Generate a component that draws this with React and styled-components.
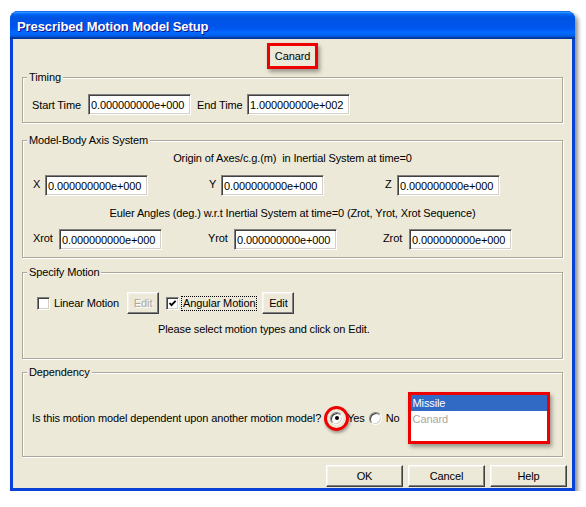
import React from "react";
import styled, { createGlobalStyle } from "styled-components";

const GlobalStyle = createGlobalStyle`
  html, body { margin: 0; background: #fff; }
  body {
    font-family: "Liberation Sans", Arial, sans-serif;
    font-size: 11px;
    letter-spacing: -0.12px;
    color: #000;
  }
`;

const Page = styled.div`
  padding: 11px 0 0 10px;
`;

const Window = styled.div`
  width: 565px;
  display: flex;
  flex-direction: column;
  background: #0842d6;
  border-radius: 8px 8px 0 0;
  box-shadow: 3px 3px 4px rgba(0, 0, 0, 0.45);
  overflow: hidden;
`;

const TitleBar = styled.div`
  height: 28px;
  display: flex;
  align-items: center;
  padding: 2px 0 0 7px;
  box-sizing: border-box;
  background: linear-gradient(
    to bottom,
    #0058ee 0%, #3593ff 4%, #288eff 6%, #127dff 8%, #036ffc 10%,
    #0262ee 14%, #0057e5 20%, #0054e3 24%, #0055eb 56%, #005bf5 66%,
    #026afe 76%, #0062ef 86%, #0052d6 92%, #0040ab 94%, #003092 100%
  );
  color: #fff;
  font-weight: bold;
  font-size: 13px;
  letter-spacing: -0.1px;
  text-shadow: 1px 1px #0f1089;
`;

const Body = styled.div`
  margin: 0 3px 3px;
  padding: 4px 9px 1px;
  background: #ece9d8;
  display: flex;
  flex-direction: column;
`;

const RedTag = styled.div`
  align-self: center;
  height: 20px;
  line-height: 20px;
  padding: 0 5px;
  border: 3px solid #ee0000;
  box-shadow: 2px 3px 4px rgba(0, 0, 0, 0.35);
`;

const GroupBox = styled.section`
  margin-top: ${(p) => p.$gap}px;
  padding: 0 0 ${(p) => p.$bottom}px;
  border: 1px solid #aca899;
  box-shadow: 1px 1px 0 #fff, inset 1px 1px 0 #fff;
  display: flex;
  flex-direction: column;
`;

const GroupTitle = styled.div`
  align-self: flex-start;
  margin: -7px 0 0 4px;
  padding: 0 2px;
  line-height: 13px;
  background: #ece9d8;
`;

const Row = styled.div`
  display: flex;
  align-items: center;
  margin-top: ${(p) => p.$top}px;
  padding-left: ${(p) => p.$left}px;
`;

const Note = styled.div`
  margin-top: ${(p) => p.$top}px;
  line-height: 13px;
  text-align: ${(p) => (p.$left ? "left" : "center")};
  padding-left: ${(p) => p.$left || 0}px;
`;

const Field = styled.label`
  display: flex;
  align-items: center;
  margin-right: ${(p) => p.$after || 0}px;
`;

const FieldLabel = styled.span`
  width: ${(p) => p.$w}px;
  flex-shrink: 0;
  position: relative;
  top: ${(p) => (p.$raised ? -2 : 0)}px;
`;

const TextBox = styled.input`
  width: 103px;
  height: 21px;
  box-sizing: border-box;
  margin: 0;
  padding: 1px 0 0 2px;
  font: inherit;
  letter-spacing: inherit;
  color: #000;
  background: #fff;
  border: 1px solid;
  border-color: #808080 #fff #fff #808080;
  box-shadow: inset 1px 1px 0 #404040, inset -1px -1px 0 #d4d0c8;
  outline: none;
`;

const Button = styled.button`
  width: ${(p) => p.$w}px;
  height: 22px;
  margin: 0 0 0 ${(p) => p.$gap || 0}px;
  padding: 0;
  font: inherit;
  letter-spacing: inherit;
  color: ${(p) => (p.disabled ? "#aca899" : "#000")};
  text-shadow: ${(p) => (p.disabled ? "1px 1px 0 #fff" : "none")};
  background: #ece9d8;
  border: 1px solid;
  border-color: #fff #404040 #404040 #fff;
  box-shadow: inset -1px -1px 0 #808080, inset 1px 1px 0 #f4f2ea;
`;

const CheckBox = styled.span`
  width: 13px;
  height: 13px;
  box-sizing: border-box;
  margin-left: ${(p) => p.$gap || 0}px;
  flex-shrink: 0;
  background: #fff;
  border: 1px solid;
  border-color: #808080 #fff #fff #808080;
  box-shadow: inset 1px 1px 0 #404040, inset -1px -1px 0 #d4d0c8;
  display: flex;
  align-items: center;
  justify-content: center;
`;

const OptionText = styled.span`
  margin-left: 3px;
  padding: 0 1px;
  line-height: 13px;
  outline: ${(p) => (p.$focus ? "1px dotted #000" : "none")};
`;

const RadioWrap = styled.span`
  position: relative;
  display: flex;
  margin-left: ${(p) => p.$gap}px;
  &::after {
    content: "";
    display: ${(p) => (p.$ring ? "block" : "none")};
    position: absolute;
    left: -6px;
    top: -6px;
    width: 19px;
    height: 19px;
    border: 3px solid #ee0000;
    border-radius: 50%;
    box-shadow: 1px 2px 3px rgba(0, 0, 0, 0.35);
  }
`;

const Radio = styled.span`
  width: 13px;
  height: 13px;
  box-sizing: border-box;
  border-radius: 50%;
  background: #fff;
  border: 1px solid;
  border-color: #808080 #fff #fff #808080;
  box-shadow: inset 1px 1px 0 #404040, inset -1px -1px 0 #d4d0c8;
  display: flex;
  align-items: center;
  justify-content: center;
`;

const Dot = styled.span`
  width: 4px;
  height: 4px;
  border-radius: 50%;
  background: #000;
`;

const RadioText = styled.span`
  margin-left: 4px;
`;

const ListBox = styled.div`
  margin-left: 8px;
  width: 142px;
  height: 52px;
  box-sizing: border-box;
  border: 3px solid #ee0000;
  background: #fff;
  box-shadow: 2px 3px 4px rgba(0, 0, 0, 0.35);
`;

const ListItem = styled.div`
  height: 16px;
  line-height: 16px;
  padding-left: 2px;
  color: ${(p) => (p.$selected ? "#fff" : "#aca899")};
  background: ${(p) => (p.$selected ? "#316ac5" : "transparent")};
`;

const ButtonRow = styled.div`
  display: flex;
  justify-content: flex-end;
  margin: 8px -4px 0 0;
`;

function Check() {
  return (
    <svg width="9" height="9" viewBox="0 0 9 9">
      <path d="M1.5 4 L3.5 6.2 L7.6 1.8" fill="none" stroke="#000" strokeWidth="1.8" />
    </svg>
  );
}

const zero = "0.000000000e+000";

export default function App() {
  return (
    <Page>
      <GlobalStyle />
      <Window>
        <TitleBar>Prescribed Motion Model Setup</TitleBar>
        <Body>
          <RedTag>Canard</RedTag>

          <GroupBox $gap={8} $bottom={7}>
            <GroupTitle>Timing</GroupTitle>
            <Row $top={10} $left={9}>
              <Field $after={6}>
                <FieldLabel $w={56}>Start Time</FieldLabel>
                <TextBox readOnly value={zero} />
              </Field>
              <Field>
                <FieldLabel $w={50}>End Time</FieldLabel>
                <TextBox readOnly value="1.000000000e+002" />
              </Field>
            </Row>
          </GroupBox>

          <GroupBox $gap={17} $bottom={7}>
            <GroupTitle>Model-Body Axis System</GroupTitle>
            <Note $top={5}>Origin of Axes/c.g.(m)&nbsp; in Inertial System at time=0</Note>
            <Row $top={10} $left={10}>
              {["X", "Y", "Z"].map((axis, i) => (
                <Field key={axis} $after={i < 2 ? 61 : 0}>
                  <FieldLabel $w={12} $raised>{axis}</FieldLabel>
                  <TextBox readOnly value={zero} />
                </Field>
              ))}
            </Row>
            <Note $top={11}>
              Euler Angles (deg.) w.r.t Inertial System at time=0 (Zrot, Yrot, Xrot Sequence)
            </Note>
            <Row $top={9} $left={10}>
              {["Xrot", "Yrot", "Zrot"].map((axis, i) => (
                <Field key={axis} $after={i < 2 ? 46 : 0}>
                  <FieldLabel $w={26} $raised>{axis}</FieldLabel>
                  <TextBox readOnly value={zero} />
                </Field>
              ))}
            </Row>
          </GroupBox>

          <GroupBox $gap={14} $bottom={22}>
            <GroupTitle>Specify Motion</GroupTitle>
            <Row $top={13} $left={14}>
              <CheckBox />
              <OptionText>Linear Motion</OptionText>
              <Button $w={32} $gap={7} disabled>Edit</Button>
              <CheckBox $gap={7}>
                <Check />
              </CheckBox>
              <OptionText $focus>Angular Motion</OptionText>
              <Button $w={32} $gap={6}>Edit</Button>
            </Row>
            <Note $top={9} $left={135}>
              Please select motion types and click on Edit.
            </Note>
          </GroupBox>

          <GroupBox $gap={13} $bottom={12}>
            <GroupTitle>Dependency</GroupTitle>
            <Row $top={13} $left={9}>
              <span>Is this motion model dependent upon another motion model?</span>
              <RadioWrap $gap={9} $ring>
                <Radio>
                  <Dot />
                </Radio>
              </RadioWrap>
              <RadioText>Yes</RadioText>
              <RadioWrap $gap={4}>
                <Radio />
              </RadioWrap>
              <RadioText>No</RadioText>
              <ListBox>
                <ListItem $selected>Missile</ListItem>
                <ListItem>Canard</ListItem>
              </ListBox>
            </Row>
          </GroupBox>

          <ButtonRow>
            <Button $w={77}>OK</Button>
            <Button $w={77} $gap={5}>Cancel</Button>
            <Button $w={77} $gap={5}>Help</Button>
          </ButtonRow>
        </Body>
      </Window>
    </Page>
  );
}
